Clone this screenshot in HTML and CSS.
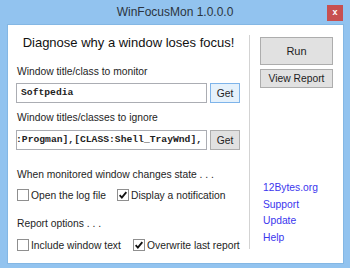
FILE: index.html
```html
<!DOCTYPE html>
<html lang="en">
<head>
    <meta charset="UTF-8">
    <title>WinFocusMon 1.0.0.0</title>
    <link rel="stylesheet" href="styles.css">
</head>
<body>
    <div class="window">
        <div class="titlebar">
            <span></span>
            <span class="title">WinFocusMon 1.0.0.0</span>
            <span class="close">x</span>
        </div>
        <div class="client">
            <div class="left">
                <h1>Diagnose why a window loses focus!</h1>

                <p class="label first">Window title/class to monitor</p>
                <div class="field-row">
                    <div class="field">Softpedia</div>
                    <button class="btn get active">Get</button>
                </div>

                <p class="label second">Window titles/classes to ignore</p>
                <div class="field-row second">
                    <div class="field clipped"><span>:Progman],[CLASS:Shell_TrayWnd],</span></div>
                    <button class="btn get">Get</button>
                </div>

                <p class="label section">When monitored window changes state . . .</p>
                <div class="checks">
                    <label class="check w-log"><span class="box"></span>Open the log file</label>
                    <label class="check"><span class="box"><svg viewBox="0 0 12 12" width="10" height="10"><path d="M2 6.2 L4.6 9 L10 2.5" fill="none" stroke="#111" stroke-width="2.2"/></svg></span>Display a notification</label>
                </div>

                <p class="label section report">Report options . . .</p>
                <div class="checks last">
                    <label class="check w-text"><span class="box"></span>Include window text</label>
                    <label class="check"><span class="box"><svg viewBox="0 0 12 12" width="10" height="10"><path d="M2 6.2 L4.6 9 L10 2.5" fill="none" stroke="#111" stroke-width="2.2"/></svg></span>Overwrite last report</label>
                </div>
            </div>

            <div class="sep"></div>

            <div class="right">
                <button class="btn run">Run</button>
                <button class="btn view">View Report</button>
                <div class="links">
                    <a href="#">12Bytes.org</a>
                    <a href="#">Support</a>
                    <a href="#">Update</a>
                    <a href="#">Help</a>
                </div>
            </div>
        </div>
    </div>
</body>
</html>
```

FILE: styles.css
```css
* {
    margin: 0;
    padding: 0;
    box-sizing: border-box;
}

body {
    font-family: "Liberation Sans", Arial, sans-serif;
    font-size: 10.3px;
    color: #1e1e1e;
    background: #92c3ef;
}

.window {
    width: 350px;
    height: 268px;
    background: #92c3ef;
    display: flex;
    flex-direction: column;
}

.titlebar {
    height: 25px;
    display: grid;
    grid-template-columns: 1fr auto 1fr;
}

.title {
    font-size: 12px;
    color: #2b3440;
    line-height: 25px;
}

.close {
    justify-self: end;
    width: 16px;
    height: 16px;
    margin: 5px 7px 0 0;
    background: #c75050;
    color: white;
    font-size: 9px;
    font-weight: bold;
    line-height: 15px;
    text-align: center;
}

.client {
    height: 238px;
    margin: 0 7px 0 8px;
    background: white;
    box-shadow: 0 0 0 1px #84b7e4;
    display: flex;
}

/* left side */
.left {
    width: 241px;
    padding: 10px 0 0 8px;
}

h1 {
    font-size: 13px;
    font-weight: normal;
    line-height: 16px;
    text-align: center;
    padding-right: 8px;
    color: #111;
}

.label {
    line-height: 12px;
    padding-left: 1px;
}

.label.first {
    margin-top: 15px;
}

.label.second {
    margin-top: 9px;
}

.label.section {
    margin-top: 19px;
}

.label.report {
    margin-top: 16px;
}

.field-row {
    display: flex;
    gap: 3px;
    margin-top: 5px;
    height: 20px;
}

.field-row.second {
    margin-top: 6px;
}

.field {
    width: 191px;
    border: 1px solid #abadb3;
    font-family: "Liberation Mono", "Courier New", monospace;
    font-weight: bold;
    font-size: 9.7px;
    line-height: 18px;
    padding-left: 4px;
    white-space: nowrap;
    overflow: hidden;
    color: #222;
}

.field.clipped {
    padding-left: 0;
}

.field.clipped span {
    margin-left: -1px;
}

.btn {
    font-family: "Liberation Sans", Arial, sans-serif;
    font-size: 10.3px;
    color: #1e1e1e;
    background: #e1e1e1;
    border: 1px solid #adadad;
}

.btn.get {
    width: 30px;
    height: 20px;
}

.btn.get.active {
    background: #e5f1fb;
    border-color: #7eb4ea;
}

.checks {
    display: flex;
    margin-top: 7px;
    height: 14px;
    align-items: center;
    padding-left: 1px;
}

.checks.last {
    margin-top: 8px;
}

.check {
    display: flex;
    align-items: center;
    gap: 2px;
}

.check.w-log {
    width: 100px;
}

.check.w-text {
    width: 116px;
}

.box {
    width: 12px;
    height: 12px;
    border: 1px solid #8f8f8f;
    background: white;
    display: flex;
    align-items: center;
    justify-content: center;
}

.sep {
    width: 1px;
    background: #d3d3d3;
    margin: 10px 0 14px;
}

/* right side */
.right {
    padding: 12px 0 0 10px;
    display: flex;
    flex-direction: column;
    align-items: flex-start;
}

.btn.run {
    width: 73px;
    height: 28px;
    font-size: 11px;
}

.btn.view {
    width: 73px;
    height: 19px;
    margin-top: 4px;
}

.links {
    margin-top: 92px;
    padding-left: 3px;
    display: flex;
    flex-direction: column;
}

.links a {
    color: #3b36ee;
    text-decoration: none;
    line-height: 16.7px;
}
```
